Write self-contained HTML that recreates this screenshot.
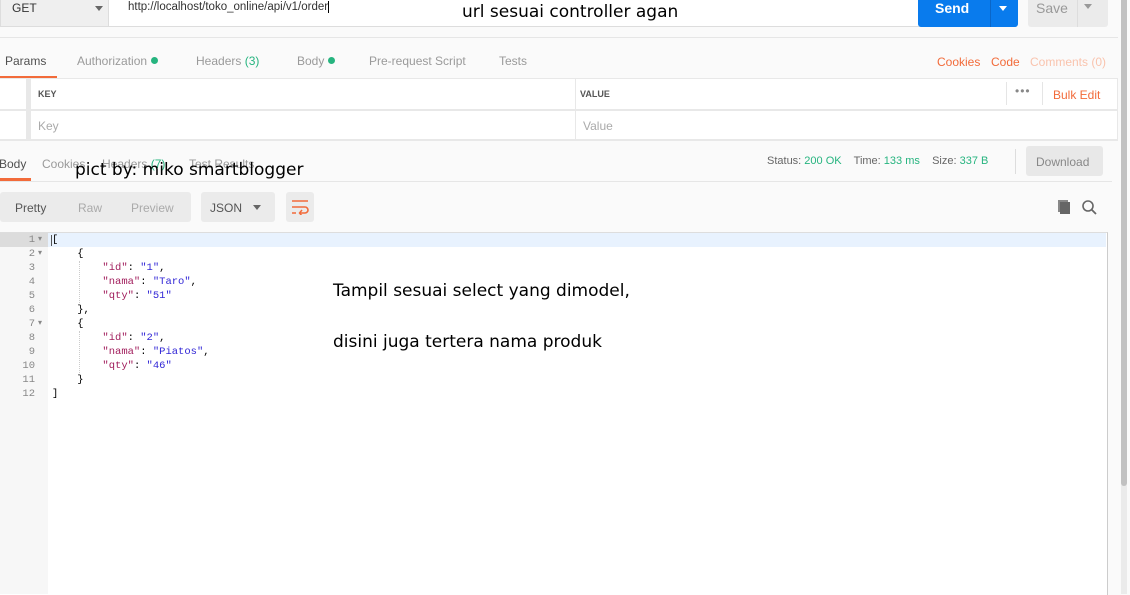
<!DOCTYPE html>
<html><head><meta charset="utf-8"><style>
body{margin:0;width:1130px;height:594px;overflow:hidden;background:#fafafa;font-family:"Liberation Sans",sans-serif;position:relative}
.a{position:absolute;white-space:nowrap}
.t{font-size:12px;color:#9a9a9a}
.g{color:#26b47f}
.o{color:#f26b3a}
.dot{display:inline-block;width:7px;height:7px;border-radius:50%;background:#26b47f;margin-left:4px;vertical-align:1px}
.code{font-family:"Liberation Mono",monospace;font-size:10.5px;line-height:14px}
.k{color:#a11d5c}.s{color:#3126d6}
.cal{font-family:"DejaVu Sans","Liberation Sans",sans-serif;color:#000}
</style></head><body>
<div class="a" style="left:0;top:0;width:107px;height:26px;background:#efefef;border:1px solid #ddd;border-top:0"></div>
<div class="a" style="left:12px;top:1px;font-size:12px;color:#333">GET</div>
<div class="a" style="left:95px;top:6px;border:4px solid transparent;border-top:5px solid #666"></div>
<div class="a" style="left:108px;top:0;width:842px;height:26px;background:#fff;border:1px solid #ddd;border-top:0"></div>
<div class="a" style="left:128px;top:1px;font-size:11.5px;color:#333">http://localhost/toko_online/api/v1/order<span style="border-left:1px solid #000">&nbsp;</span></div>
<div class="a cal" style="left:462px;top:2px;font-size:17px">url sesuai controller agan</div>
<div class="a" style="left:918px;top:0;width:100px;height:27px;background:#097bed;border-radius:0 0 3px 3px"></div>
<div class="a" style="left:935px;top:0;font-size:14px;font-weight:bold;color:#fff">Send</div>
<div class="a" style="left:990px;top:0;width:1px;height:27px;background:#0a66c8"></div>
<div class="a" style="left:999px;top:6px;border:4px solid transparent;border-top:5px solid #fff"></div>
<div class="a" style="left:1028px;top:0;width:80px;height:27px;background:#ebebeb;border-radius:0 0 3px 3px"></div>
<div class="a" style="left:1036px;top:0;font-size:14px;color:#999">Save</div>
<div class="a" style="left:1077px;top:0;width:1px;height:27px;background:#ddd"></div>
<div class="a" style="left:1084px;top:4px;border:4px solid transparent;border-top:5px solid #999"></div>
<div class="a" style="left:0;top:37px;width:1118px;height:1px;background:#e6e6e6"></div>
<div class="a t" style="left:5px;top:54px;color:#505050">Params</div>
<div class="a" style="left:0;top:76px;width:57px;height:2px;background:#f26b3a"></div>
<div class="a t" style="left:77px;top:54px">Authorization<span class="dot"></span></div>
<div class="a t" style="left:196px;top:54px">Headers <span class="g">(3)</span></div>
<div class="a t" style="left:297px;top:54px">Body<span class="dot"></span></div>
<div class="a t" style="left:369px;top:54px">Pre-request Script</div>
<div class="a t" style="left:499px;top:54px">Tests</div>
<div class="a t o" style="left:937px;top:55px">Cookies</div>
<div class="a t o" style="left:991px;top:55px">Code</div>
<div class="a t" style="left:1030px;top:55px;color:#f9c3ad">Comments (0)</div>
<div class="a" style="left:0;top:78px;width:1118px;height:63px;background:#e8e8e8"></div>
<div class="a" style="left:0;top:79px;width:26px;height:30px;background:#fff"></div>
<div class="a" style="left:31px;top:79px;width:544px;height:30px;background:#fff"></div>
<div class="a" style="left:576px;top:79px;width:541px;height:30px;background:#fff"></div>
<div class="a" style="left:0;top:111px;width:26px;height:28px;background:#fff"></div>
<div class="a" style="left:31px;top:111px;width:544px;height:28px;background:#fff"></div>
<div class="a" style="left:576px;top:111px;width:541px;height:28px;background:#fff"></div>
<div class="a" style="left:38px;top:89px;font-size:9px;font-weight:bold;color:#555">KEY</div>
<div class="a" style="left:580px;top:89px;font-size:9px;font-weight:bold;color:#555">VALUE</div>
<div class="a" style="left:1006px;top:82px;width:1px;height:23px;background:#e5e5e5"></div>
<div class="a" style="left:1042px;top:82px;width:1px;height:23px;background:#e5e5e5"></div>
<div class="a" style="left:1015px;top:84px;font-size:12px;color:#888;letter-spacing:1px">•••</div>
<div class="a t o" style="left:1053px;top:88px">Bulk Edit</div>
<div class="a t" style="left:38px;top:119px;color:#aaa">Key</div>
<div class="a t" style="left:583px;top:119px;color:#aaa">Value</div>
<div class="a t" style="left:-1px;top:157px;color:#505050">Body</div>
<div class="a" style="left:0;top:178px;width:31px;height:3px;background:#f26b3a"></div>
<div class="a t" style="left:42px;top:157px">Cookies</div>
<div class="a t" style="left:102px;top:157px">Headers <span class="g">(7)</span></div>
<div class="a t" style="left:189px;top:157px">Test Results</div>
<div class="a cal" style="left:75px;top:160px;font-size:17px">pict by: miko smartblogger</div>
<div class="a" style="left:767px;top:155px;font-size:11px;color:#666">Status: <span class="g">200 OK</span>&nbsp;&nbsp;&nbsp; Time: <span class="g">133 ms</span>&nbsp;&nbsp;&nbsp; Size: <span class="g">337 B</span></div>
<div class="a" style="left:1015px;top:149px;width:1px;height:25px;background:#ddd"></div>
<div class="a" style="left:1026px;top:146px;width:77px;height:30px;background:#e8e8e8;border-radius:3px"></div>
<div class="a t" style="left:1036px;top:155px;color:#888">Download</div>
<div class="a" style="left:0;top:181px;width:1112px;height:1px;background:#e6e6e6"></div>
<div class="a" style="left:0;top:192px;width:191px;height:30px;background:#ebebeb;border-radius:3px"></div>
<div class="a t" style="left:15px;top:201px;color:#555">Pretty</div>
<div class="a t" style="left:78px;top:201px;color:#aaa">Raw</div>
<div class="a t" style="left:131px;top:201px;color:#aaa">Preview</div>
<div class="a" style="left:201px;top:192px;width:74px;height:30px;background:#ebebeb;border-radius:3px"></div>
<div class="a t" style="left:210px;top:201px;color:#555">JSON</div>
<div class="a" style="left:253px;top:205px;border:4px solid transparent;border-top:5px solid #666"></div>
<div class="a" style="left:286px;top:192px;width:28px;height:30px;background:#ebebeb;border-radius:3px"></div>
<svg class="a" style="left:291px;top:199px" width="18" height="16"><path d="M1 2H17M1 8H14a3 3 0 0 1 0 6H9M1 14H5" stroke="#f26b3a" stroke-width="1.6" fill="none"/><path d="M11 11l-2.5 3 2.5 3" stroke="#f26b3a" stroke-width="1.5" fill="none"/></svg>
<svg class="a" style="left:1056px;top:199px" width="16" height="16"><rect x="2" y="1" width="10" height="12" fill="#888"/><rect x="4" y="3" width="10" height="12" fill="#666"/></svg>
<svg class="a" style="left:1081px;top:199px" width="16" height="16"><circle cx="7" cy="7" r="5" stroke="#666" stroke-width="1.6" fill="none"/><path d="M11 11l4 4" stroke="#666" stroke-width="1.8"/></svg>
<div class="a" style="left:0;top:232px;width:1107px;height:362px;background:#fff;border-top:1px solid #ddd;border-right:1px solid #ccc"></div>
<div class="a" style="left:0;top:233px;width:48px;height:361px;background:#f7f7f7"></div>
<div class="a" style="left:0;top:233px;width:48px;height:14px;background:#dcdcdc"></div>
<div class="a" style="left:48px;top:233px;width:1058px;height:14px;background:#e8f2fe"></div>
<div class="a" style="left:51px;top:235px;width:1px;height:11px;background:#555"></div>
<div class="a code" style="left:0;top:233px;width:35px;text-align:right;color:#888;white-space:normal">1<br>2<br>3<br>4<br>5<br>6<br>7<br>8<br>9<br>10<br>11<br>12</div>
<div class="a code" style="left:38px;top:233px;color:#888;font-size:8px;line-height:14px;white-space:normal">▾<br>▾<br><br><br><br><br>▾</div>
<div class="a" style="left:79px;top:261px;height:42px;border-left:1px dotted #ccc"></div>
<div class="a" style="left:79px;top:331px;height:42px;border-left:1px dotted #ccc"></div>
<pre class="a code" style="left:52px;top:233px;margin:0;color:#000;white-space:pre">[
    {
        <span class="k">"id"</span>: <span class="s">"1"</span>,
        <span class="k">"nama"</span>: <span class="s">"Taro"</span>,
        <span class="k">"qty"</span>: <span class="s">"51"</span>
    },
    {
        <span class="k">"id"</span>: <span class="s">"2"</span>,
        <span class="k">"nama"</span>: <span class="s">"Piatos"</span>,
        <span class="k">"qty"</span>: <span class="s">"46"</span>
    }
]</pre>
<div class="a cal" style="left:333px;top:281px;font-size:17px">Tampil sesuai select yang dimodel,</div>
<div class="a cal" style="left:333px;top:332px;font-size:17px">disini juga tertera nama produk</div>
<div class="a" style="left:1121px;top:0;width:6px;height:594px;background:#ebebeb"></div>
<div class="a" style="left:1121px;top:0;width:6px;height:486px;background:#c1c1c1;border-radius:0 0 3px 3px"></div>
</body></html>
